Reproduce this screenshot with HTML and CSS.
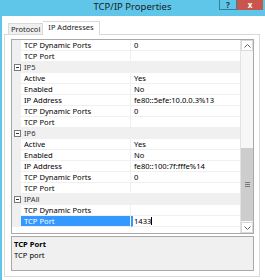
FILE: index.html
```html
<!DOCTYPE html>
<html lang="en">
<head>
  <meta charset="UTF-8">
  <title>TCP/IP Properties</title>
  <link rel="stylesheet" href="styles.css">
</head>
<body>
  <div class="window">
    <div class="titlebar">
      <div class="title">TCP/IP Properties</div>
      <div class="caption-btn help">?</div>
      <div class="caption-btn close">x</div>
    </div>

    <div class="dialog">
      <div class="tabs">
        <div class="tab">Protocol</div>
        <div class="tab active">IP Addresses</div>
      </div>

      <div class="panel">
        <div class="grid">
          <div class="rows">
            <div class="row"><span class="gutter"></span><span class="name">TCP Dynamic Ports</span><span class="value">0</span></div>
            <div class="row"><span class="gutter"></span><span class="name">TCP Port</span><span class="value"></span></div>
            <div class="row category"><span class="gutter"><i class="toggle"></i></span><span class="name">IP5</span></div>
            <div class="row"><span class="gutter"></span><span class="name">Active</span><span class="value">Yes</span></div>
            <div class="row"><span class="gutter"></span><span class="name">Enabled</span><span class="value">No</span></div>
            <div class="row"><span class="gutter"></span><span class="name">IP Address</span><span class="value">fe80::5efe:10.0.0.3%13</span></div>
            <div class="row"><span class="gutter"></span><span class="name">TCP Dynamic Ports</span><span class="value">0</span></div>
            <div class="row"><span class="gutter"></span><span class="name">TCP Port</span><span class="value"></span></div>
            <div class="row category"><span class="gutter"><i class="toggle"></i></span><span class="name">IP6</span></div>
            <div class="row"><span class="gutter"></span><span class="name">Active</span><span class="value">Yes</span></div>
            <div class="row"><span class="gutter"></span><span class="name">Enabled</span><span class="value">No</span></div>
            <div class="row"><span class="gutter"></span><span class="name">IP Address</span><span class="value">fe80::100:7f:fffe%14</span></div>
            <div class="row"><span class="gutter"></span><span class="name">TCP Dynamic Ports</span><span class="value">0</span></div>
            <div class="row"><span class="gutter"></span><span class="name">TCP Port</span><span class="value"></span></div>
            <div class="row category"><span class="gutter"><i class="toggle"></i></span><span class="name">IPAll</span></div>
            <div class="row"><span class="gutter"></span><span class="name">TCP Dynamic Ports</span><span class="value"></span></div>
            <div class="row selected"><span class="gutter"></span><span class="name">TCP Port</span><span class="value editing">1433<span class="caret"></span></span></div>
          </div>

          <div class="scrollbar">
            <div class="arrow">
              <svg width="7" height="4" viewBox="0 0 7 4"><path d="M0.5 3.5 L3.5 0.5 L6.5 3.5" fill="none" stroke="#606060" stroke-width="1"/></svg>
            </div>
            <div class="track">
              <div class="thumb"><span class="grip"></span></div>
            </div>
            <div class="arrow">
              <svg width="7" height="4" viewBox="0 0 7 4"><path d="M0.5 0.5 L3.5 3.5 L6.5 0.5" fill="none" stroke="#606060" stroke-width="1"/></svg>
            </div>
          </div>
        </div>

        <div class="description">
          <div class="desc-title">TCP Port</div>
          <div class="desc-text">TCP port</div>
        </div>
      </div>
    </div>
  </div>
</body>
</html>
```

FILE: styles.css
```css
body {
  margin: 0;
  font-family: "Noto Sans", "Open Sans", sans-serif;
  background-color: #fff;
  color: #000;
}

.window {
  width: 265px;
  height: 280px;
  display: flex;
  flex-direction: column;
  overflow: hidden;
}

.titlebar {
  height: 16px;
  flex: none;
  display: flex;
  align-items: flex-start;
  padding-left: 46px;
  padding-right: 2px;
  background-color: #5fc6e9;
}

.title {
  flex: 1;
  text-align: center;
  font-size: 9.5px;
  line-height: 14px;
  color: #1a1a1a;
}

.caption-btn {
  height: 10px;
  box-sizing: border-box;
  font-size: 8px;
  line-height: 9px;
  font-weight: bold;
  text-align: center;
}

.caption-btn.help {
  width: 18px;
  border: 1px solid #3b7f96;
  border-top: none;
  color: #1a3a46;
}

.caption-btn.close {
  width: 26px;
  background-color: #c9564c;
  color: #fff;
}

.dialog {
  flex: 1;
  border-left: 2px solid #5fc6e9;
  padding: 5px 5px 3px 2px;
  display: flex;
  flex-direction: column;
}

.tabs {
  display: flex;
  align-items: flex-end;
  margin-left: 4px;
  height: 13px;
  position: relative;
  z-index: 1;
}

.tab {
  height: 10px;
  padding: 0 2px;
  border: 1px solid #d9d9d9;
  border-bottom: none;
  background-color: #f0f0f0;
  font-size: 7.5px;
  line-height: 10px;
  color: #222;
}

.tab.active {
  height: 13px;
  padding: 0 5px;
  background-color: #fff;
  border-left: none;
  margin-bottom: -1px;
}

.panel {
  flex: 1;
  border: 1px solid #d9d9d9;
  padding: 4px 5px 5px 6px;
  display: flex;
  flex-direction: column;
  gap: 2px;
}

.grid {
  height: 195px;
  box-sizing: border-box;
  border: 1px solid #a9a9a9;
  display: flex;
  background-color: #fff;
}

.rows {
  flex: 1;
  font-size: 7.6px;
}

.row {
  display: grid;
  grid-template-columns: 9px 110px 1fr;
  height: 11px;
  line-height: 10px;
}

.gutter {
  background-color: #f0f0f0;
  display: flex;
  align-items: center;
  justify-content: center;
}

.name, .value {
  padding-left: 3px;
  border-bottom: 1px solid #f0f0f0;
  white-space: nowrap;
  overflow: hidden;
}

.name {
  border-right: 1px solid #f0f0f0;
}

.category {
  background-color: #f0f0f0;
}

.category .name {
  grid-column: 2 / 4;
  border: none;
  color: #333;
}

.toggle {
  width: 7px;
  height: 7px;
  box-sizing: border-box;
  border: 1px solid #7a7a7a;
  background-color: #fff;
  position: relative;
  margin-left: 2px;
}

.toggle::after {
  content: "";
  position: absolute;
  left: 1px;
  top: 2px;
  width: 3px;
  height: 1px;
  background-color: #333;
}

.selected .name {
  background-color: #3399ff;
  color: #fff;
}

.value.editing {
  border-left: 2px solid #3399ff;
  padding-left: 1px;
  display: flex;
  align-items: center;
}

.caret {
  width: 1px;
  height: 8px;
  background-color: #000;
}

.scrollbar {
  width: 12px;
  border-left: 1px solid #e3e3e3;
  background-color: #f7f7f7;
  display: flex;
  flex-direction: column;
}

.arrow {
  height: 11px;
  border: 1px solid #d9d9d9;
  box-sizing: border-box;
  background-color: #fff;
  display: flex;
  align-items: center;
  justify-content: center;
}

.track {
  flex: 1;
  display: flex;
  flex-direction: column;
  justify-content: flex-end;
}

.thumb {
  height: 73px;
  margin: 0 0 1px;
  background-color: #cdcdcd;
  display: flex;
  align-items: center;
  justify-content: center;
}

.grip {
  width: 5px;
  height: 5px;
  background: repeating-linear-gradient(#777 0 1px, transparent 1px 2px);
}

.description {
  flex: 1;
  border: 1px solid #a9a9a9;
  background-color: #f0f0f0;
  padding: 2px 2px;
  font-size: 7.6px;
  line-height: 11px;
}

.desc-title {
  font-weight: bold;
}
```
